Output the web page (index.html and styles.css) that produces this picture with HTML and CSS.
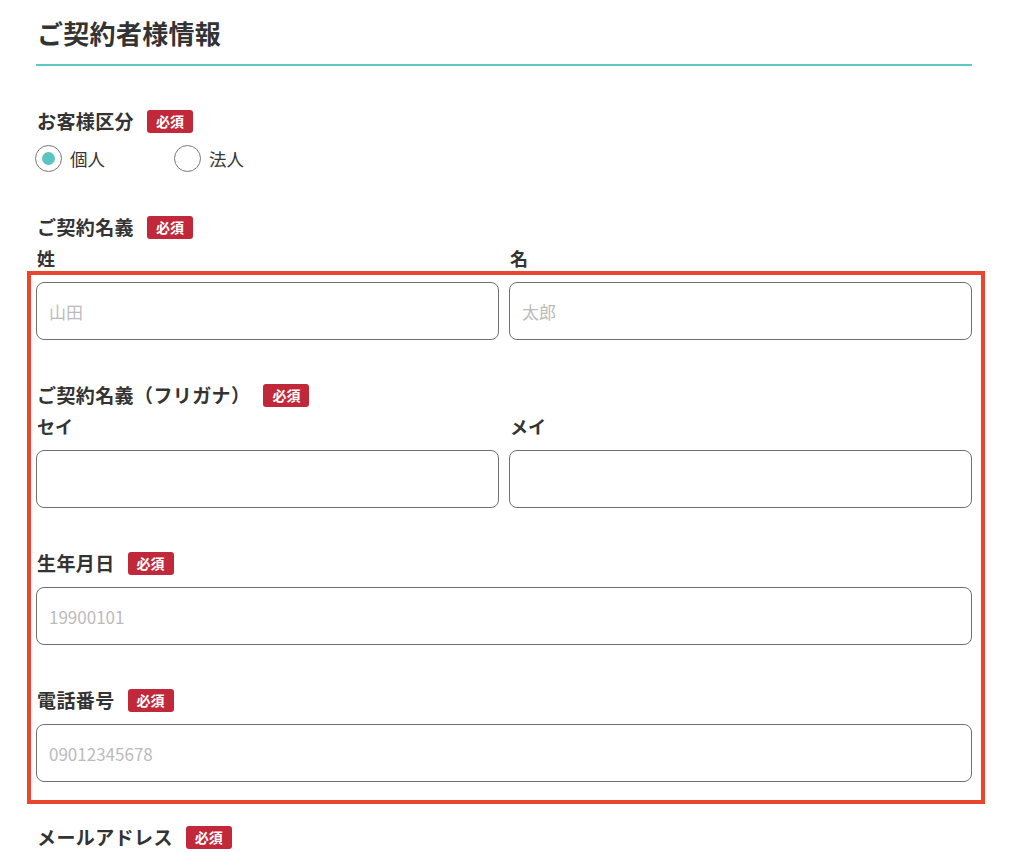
FILE: index.html
```html
<!DOCTYPE html>
<html lang="ja">
<head>
  <meta charset="UTF-8" />
  <title>ご契約者様情報</title>
  <link rel="stylesheet" href="styles.css">
</head>
<body>
  <div class="page">
    <h1 class="section-title">ご契約者様情報</h1>

    <!-- Customer type -->
    <div class="field">
      <div class="field-label">お客様区分 <span class="required">必須</span></div>
      <div class="radio-row">
        <label class="radio"><input type="radio" name="type" checked /><span>個人</span></label>
        <label class="radio"><input type="radio" name="type" /><span>法人</span></label>
      </div>
    </div>

    <div class="field">
      <div class="field-label">ご契約名義 <span class="required">必須</span></div>
      <div class="split">
        <div class="col">
          <div class="sub-label">姓</div>
          <input type="text" class="text-input" placeholder="山田" />
        </div>
        <div class="col">
          <div class="sub-label">名</div>
          <input type="text" class="text-input" placeholder="太郎" />
        </div>
      </div>
    </div>

    <div class="field">
      <div class="field-label">ご契約名義（フリガナ） <span class="required">必須</span></div>
      <div class="split">
        <div class="col">
          <div class="sub-label">セイ</div>
          <input type="text" class="text-input" />
        </div>
        <div class="col">
          <div class="sub-label">メイ</div>
          <input type="text" class="text-input" />
        </div>
      </div>
    </div>

    <div class="field">
      <div class="field-label">生年月日 <span class="required">必須</span></div>
      <input type="text" class="text-input" placeholder="19900101" />
    </div>

    <div class="field">
      <div class="field-label">電話番号 <span class="required">必須</span></div>
      <input type="text" class="text-input" placeholder="09012345678" />
    </div>

    <div class="field">
      <div class="field-label">メールアドレス <span class="required">必須</span></div>
    </div>

    <!-- Annotation frame -->
    <div class="highlight"></div>
  </div>
</body>
</html>
```

FILE: styles.css
```css
body {
  margin: 0;
  background: #fff;
  color: #333;
  font-family: "Noto Sans CJK JP", "Noto Sans", sans-serif;
}

.page {
  position: relative;
  width: 936px;
  padding: 0 36px;
  height: 852px;
  overflow: hidden;
}

.section-title {
  margin: 15px 0 0;
  padding: 0 0 13px 1px;
  font-size: 26px;
  line-height: 36px;
  font-weight: bold;
  letter-spacing: 0.3px;
  border-bottom: 2px solid #5ec8c5;
}

.field {
  margin-top: 41px;
}

.field-label {
  display: flex;
  align-items: center;
  font-size: 19px;
  line-height: 28px;
  font-weight: bold;
  letter-spacing: 0.4px;
  margin-bottom: 10px;
  padding-left: 1px;
}

.required {
  display: inline-block;
  margin-left: 13px;
  padding: 0 9px;
  background: #c1283a;
  color: #fff;
  font-size: 14px;
  line-height: 23px;
  letter-spacing: 0;
  border-radius: 3px;
  font-weight: bold;
}

.split {
  display: flex;
  gap: 10px;
  margin-top: -7px;
}

.col {
  flex: 1;
}

.sub-label {
  font-size: 18px;
  line-height: 28px;
  font-weight: bold;
  margin-bottom: 10px;
  padding-left: 1px;
}

.text-input {
  display: block;
  box-sizing: border-box;
  width: 100%;
  height: 58px;
  margin: 0;
  padding: 0 12px;
  border: 1px solid #707070;
  border-radius: 8px;
  font-family: inherit;
  font-size: 17px;
  color: #333;
  background: #fff;
}

.text-input::placeholder {
  color: #bbb;
}

/* Radio buttons */
.radio-row {
  display: flex;
  height: 28px;
  align-items: center;
  margin-top: -1px;
}

.radio {
  display: flex;
  align-items: center;
  margin-right: 70px;
  font-size: 17.5px;
}

.radio input {
  appearance: none;
  box-sizing: border-box;
  width: 27px;
  height: 27px;
  margin: 0 8px 0 -1px;
  border: 1.5px solid #777;
  border-radius: 50%;
  background: #fff;
  display: grid;
  place-items: center;
}

.radio input:checked::after {
  content: "";
  width: 13px;
  height: 13px;
  border-radius: 50%;
  background: #5ac4c1;
}

/* Annotation frame */
.highlight {
  position: absolute;
  left: 27px;
  top: 271px;
  width: 950px;
  height: 525px;
  border: 4px solid #e9452f;
  pointer-events: none;
}
```
